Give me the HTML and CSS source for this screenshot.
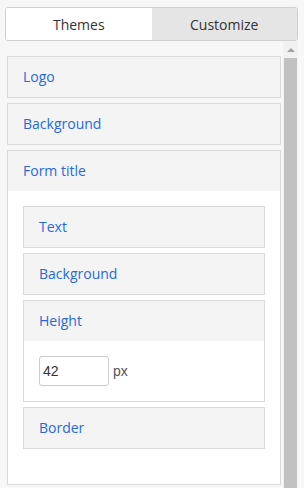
FILE: index.html
```html
<!DOCTYPE html>
<html lang="en">
<head>
    <meta charset="UTF-8">
    <meta name="viewport" content="width=device-width, initial-scale=1.0">
    <title>Form Designer</title>
    <link rel="stylesheet" href="styles.css">
</head>
<body>
    <div class="tabs">
        <div class="tab active">Themes</div>
        <div class="tab">Customize</div>
    </div>

    <div class="main">
        <div class="list">
            <div class="section">
                <div class="section-head">Logo</div>
            </div>
            <div class="section">
                <div class="section-head">Background</div>
            </div>
            <div class="section open">
                <div class="section-head">Form title</div>
                <div class="section-body">
                    <div class="section sub">
                        <div class="section-head">Text</div>
                    </div>
                    <div class="section sub">
                        <div class="section-head">Background</div>
                    </div>
                    <div class="section sub open">
                        <div class="section-head">Height</div>
                        <div class="field">
                            <input type="text" value="42">
                            <span class="unit">px</span>
                        </div>
                    </div>
                    <div class="section sub">
                        <div class="section-head">Border</div>
                    </div>
                </div>
            </div>
        </div>
        <div class="scrollbar">
            <div class="arrow"></div>
            <div class="thumb"></div>
        </div>
    </div>
</body>
</html>
```

FILE: styles.css
```css
* {
    margin: 0;
    padding: 0;
    box-sizing: border-box;
}
body {
    background: #f7f7f7;
    font-family: "Open Sans", sans-serif;
    font-size: 14px;
    height: 488px;
    overflow: hidden;
}
.tabs {
    display: flex;
    margin: 7px 6px 0 5px;
    height: 34px;
    border: 1px solid #d0d0d0;
    border-radius: 3px;
    overflow: hidden;
}
.tab {
    flex: 1;
    display: flex;
    align-items: center;
    justify-content: center;
    color: #333;
    background: #e5e5e5;
}
.tab.active {
    background: #fff;
}
.main {
    display: flex;
    padding-left: 7px;
    margin-right: 6px;
}
.list {
    width: 274px;
    padding-top: 15px;
}
.section {
    border: 1px solid #dadada;
    background: #f4f4f4;
    margin-bottom: 5px;
}
.section.open {
    margin-top: 5px;
}
.section.sub.open {
    margin-top: 0;
}
.section-head {
    height: 40px;
    line-height: 40px;
    padding-left: 15px;
    color: #2769d8;
}
.section-body {
    background: #fff;
    padding: 15px 15px 30px;
}
.field {
    background: #fff;
    display: flex;
    align-items: center;
    padding: 15px;
    gap: 4px;
}
.field input {
    width: 70px;
    height: 30px;
    border: 1px solid #ccc;
    border-radius: 3px;
    padding-left: 3px;
    font-family: "Liberation Sans", Arial, sans-serif;
    font-size: 14px;
    color: #333;
}
.unit {
    font-family: "Liberation Sans", Arial, sans-serif;
    color: #555;
}
.scrollbar {
    width: 15px;
    margin-left: 2px;
    height: 447px;
    background: #f1f1f1;
    display: flex;
    flex-direction: column;
    align-items: center;
}
.arrow {
    margin-top: 7px;
    width: 0;
    height: 0;
    border-left: 4px solid transparent;
    border-right: 4px solid transparent;
    border-bottom: 4px solid #a3a3a3;
}
.thumb {
    margin-top: 6px;
    width: 13px;
    flex: 1;
    background: #c1c1c1;
}
```
